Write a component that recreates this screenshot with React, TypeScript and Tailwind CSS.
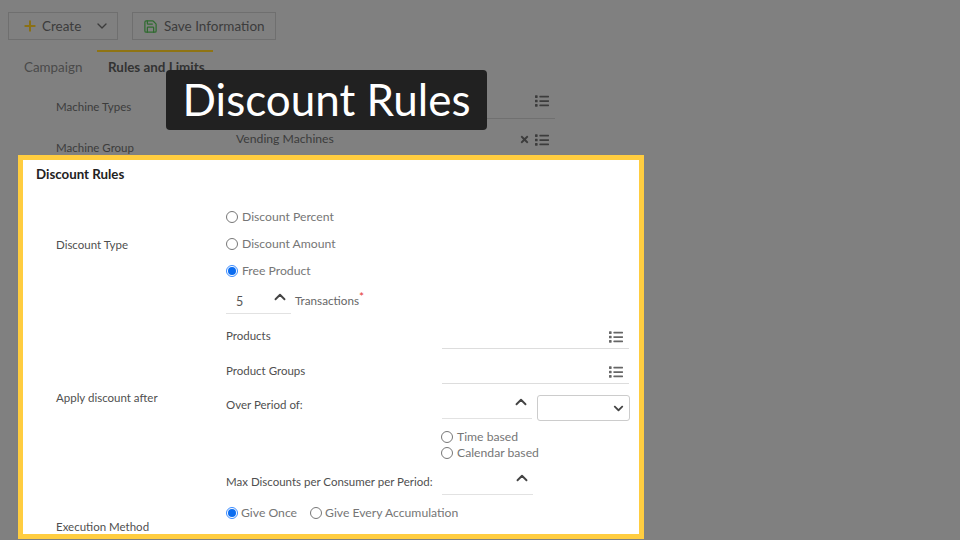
import { ChevronDown, ChevronUp, Plus, Save } from 'lucide-react';
import { FaChevronDown, FaList, FaTimes } from 'react-icons/fa';

function Radio({ label, checked, tight }: { label: string; checked?: boolean; tight?: boolean }) {
  return (
    <div className={`flex items-center text-[12.2px] leading-[16px] text-[#767676] ${tight ? 'gap-[3px]' : 'gap-[4px]'}`}>
      {checked ? (
        <span className="flex h-[12px] w-[12px] items-center justify-center rounded-full border border-[#3b8cff] bg-white">
          <span className="h-[8px] w-[8px] rounded-full bg-[#0a6cf0]" />
        </span>
      ) : (
        <span className="h-[12px] w-[12px] rounded-full border border-[#777777] bg-white" />
      )}
      <span>{label}</span>
    </div>
  );
}

function ListField() {
  return (
    <div className="flex h-[24px] items-center justify-end border-b border-[#dddddd] pr-[6px] text-[#666666]">
      <FaList size={14} />
    </div>
  );
}

function NumberField({ value, className }: { value?: string; className: string }) {
  return (
    <div className={`flex h-[26px] items-start justify-between border-b border-[#e2e2e2] text-[12.5px] text-[#555555] ${className}`}>
      <span className="pl-[10px] pt-[5px]">{value}</span>
      <ChevronUp size={18} strokeWidth={2.5} className="mr-[2px] text-[#444444]" />
    </div>
  );
}

function DimmedPage() {
  return (
    <div className="h-[540px] w-[960px] bg-[#808080] text-[#3c3c3c]">
      <div className="flex gap-[14px] pl-[8px] pt-[12px]">
        <div className="flex h-[28px] w-[110px] items-center border border-[#6f6f6f] pl-[13px] text-[13.5px]">
          <Plus size={16} strokeWidth={3} className="text-[#8a7015]" />
          <span className="ml-[4px]">Create</span>
          <ChevronDown size={16} className="ml-[13px]" />
        </div>
        <div className="flex h-[28px] w-[144px] items-center border border-[#6f6f6f] pl-[10px] text-[13.5px]">
          <Save size={15} className="text-[#2f6b2f]" />
          <span className="ml-[6px]">Save Information</span>
        </div>
      </div>
      <div className="ml-[97px] mt-[10px] h-[2px] w-[116px] bg-[#8f7414]" />
      <div className="flex pl-[24px] pt-[6px] text-[13.4px] leading-[18px]">
        <span className="w-[84px] text-[#4a4a4a]">Campaign</span>
        <span className="font-bold text-[#333333]">Rules and Limits</span>
      </div>
      <div className="ml-[56px] mt-[14px] flex h-[29px] w-[499px] text-[11.5px]">
        <span className="w-[170px] pt-[8px]">Machine Types</span>
        <div className="flex flex-1 justify-end border-b border-[#707070] pr-[6px] pt-[4px]">
          <FaList size={14} />
        </div>
      </div>
      <div className="ml-[56px] mt-[9px] flex h-[29px] w-[499px] text-[11.5px]">
        <span className="w-[170px] pt-[11px]">Machine Group</span>
        <div className="flex flex-1 items-center justify-between border-b border-[#707070] pb-[5px] pl-[10px] pr-[6px]">
          <span className="text-[12.2px]">Vending Machines</span>
          <span className="flex items-center gap-[5px]">
            <FaTimes size={11} />
            <FaList size={14} />
          </span>
        </div>
      </div>
    </div>
  );
}

function DiscountPanel() {
  return (
    <div className="absolute left-[18px] top-[155px] h-[384px] w-[626px] overflow-hidden border-[5px] border-[#ffcd40] bg-white pl-[13px] text-[#4f4f4f]">
      <h2 className="pt-[5px] text-[13.3px] font-bold leading-[18px] text-[#222222]">Discount Rules</h2>

      <div className="mt-[26px] grid grid-cols-[170px_1fr] pl-[20px] text-[11.5px]">
        <div className="flex items-center pt-[1px]">Discount Type</div>
        <div className="flex flex-col gap-[11px]">
          <Radio label="Discount Percent" />
          <Radio label="Discount Amount" />
          <Radio label="Free Product" checked />
        </div>

        <div className="flex items-center pt-[21px]">Apply discount after</div>
        <div className="mt-[9px]">
          <div className="flex items-center">
            <NumberField value="5" className="w-[65px]" />
            <span className="ml-[4px] text-[11.7px] text-[#666666]">Transactions</span>
            <span className="mb-[8px] text-[12px] leading-none text-[#e53935]">*</span>
          </div>

          <div className="mt-[11px] grid grid-cols-[216px_187px] gap-y-[11px]">
            <div className="pt-[2px]">Products</div>
            <ListField />
            <div className="pt-[2px]">Product Groups</div>
            <ListField />
            <div className="pt-[1px]">Over Period of:</div>
            <div className="-mr-[1px] flex justify-between">
              <NumberField className="-mt-[2px] w-[90px]" />
              <div className="flex h-[26px] w-[93px] items-center justify-end rounded-[3px] border border-[#cccccc] pr-[5px] text-[#444444]">
                <FaChevronDown size={11} />
              </div>
            </div>
          </div>

          <div className="ml-[215px] mt-[8px]">
            <Radio label="Time based" />
            <Radio label="Calendar based" />
          </div>

          <div className="mt-[8px] flex items-end">
            <span className="w-[216px] pb-[5px]">Max Discounts per Consumer per Period:</span>
            <NumberField className="w-[91px]" />
          </div>
        </div>

        <div className="pt-[23px]">Execution Method</div>
        <div className="mt-[10px] flex items-start gap-[13px]">
          <Radio label="Give Once" checked tight />
          <Radio label="Give Every Accumulation" tight />
        </div>
      </div>
    </div>
  );
}

export default function App() {
  return (
    <div className="relative h-[540px] w-[960px] overflow-hidden font-['Lato',sans-serif]">
      <DimmedPage />
      <DiscountPanel />
      <div className="absolute left-[166px] top-[70px] flex h-[60px] w-[321px] items-center justify-center rounded-[4px] bg-[#212121] pb-[2px] text-[44px] text-white">
        Discount Rules
      </div>
    </div>
  );
}
